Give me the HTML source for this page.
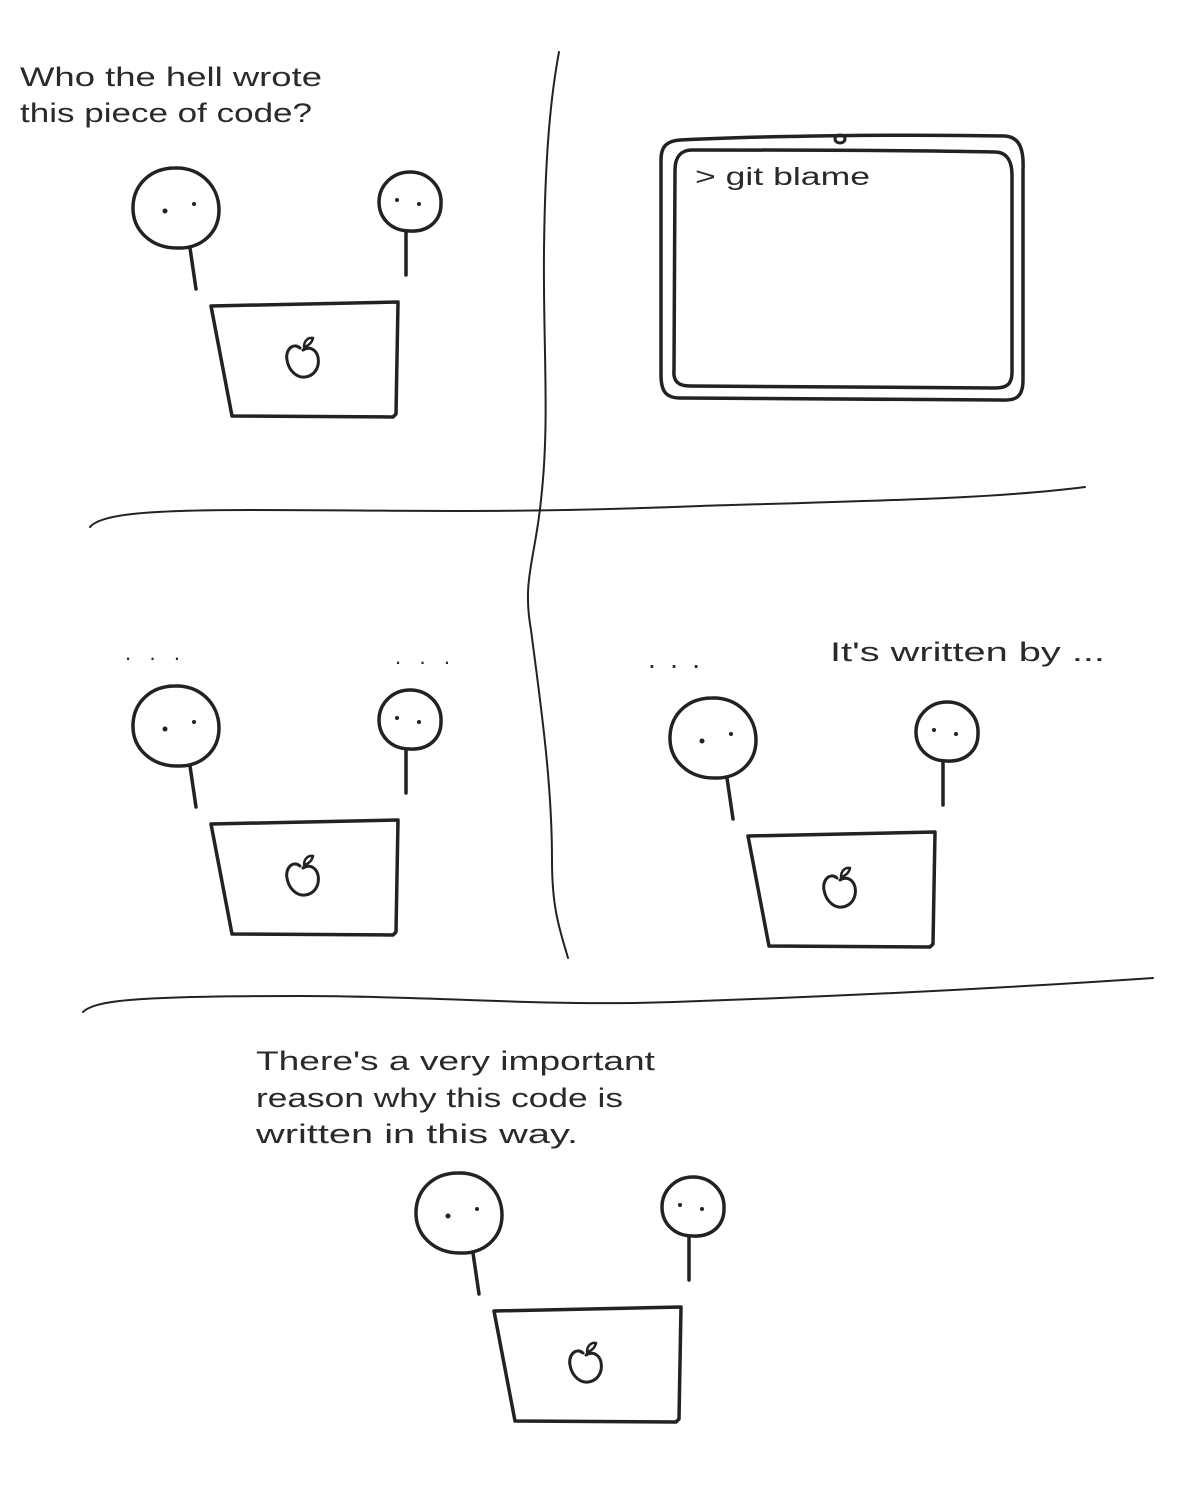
<!DOCTYPE html>
<html><head><meta charset="utf-8"><style>
html,body{margin:0;padding:0;background:#fff;}
svg{display:block}
text{font-family:"Liberation Sans",sans-serif;fill:#2a2a2a;font-size:27px}
</style></head><body>
<svg width="1200" height="1500" viewBox="0 0 1200 1500" xmlns="http://www.w3.org/2000/svg">
<defs>
<g id="scene" fill="none" stroke="#222" stroke-width="3.5" stroke-linecap="round" stroke-linejoin="round">
  <path d="M175 168 C200 167 219 186 219 210 C219 233 201 249 177 248 C152 248 132 231 133 206 C134 184 151 168 175 168 Z"/>
  <path d="M190 248 L196 289"/>
  <path d="M410 172 C428 172 442 186 441 204 C441 221 428 232 410 231 C392 231 379 219 379 202 C379 185 393 172 410 172 Z"/>
  <path d="M406 232 L406 275"/>
  <path d="M211 306 L398 302 L396 414 L393 417 L232 416 Z"/>
  <path d="M300 348 C293 342 285 350 287 360 C289 372 298 378 305 377 C314 376 320 368 318 357 C316 349 309 346 303 350" stroke-width="3"/>
  <path d="M304 347 C304 341 308 337 313 338 C312 343 308 346 304 347 Z" stroke-width="2.5"/>
  <circle cx="165" cy="211" r="2.5" fill="#222" stroke="none"/>
  <circle cx="194" cy="204" r="2" fill="#222" stroke="none"/>
  <circle cx="397" cy="200" r="2" fill="#222" stroke="none"/>
  <circle cx="419" cy="204" r="2" fill="#222" stroke="none"/>
</g>
</defs>

<text x="20" y="86" textLength="302" lengthAdjust="spacingAndGlyphs">Who the hell wrote</text>
<text x="20" y="122" textLength="292" lengthAdjust="spacingAndGlyphs">this piece of code?</text>
<use href="#scene"/>

<g fill="none" stroke="#222" stroke-width="2" stroke-linecap="round">
  <path d="M559 52 C550 100 545 160 544 250 C543 350 550 420 541 500 C535 560 522 580 531 630 C540 700 552 780 552 860 C552 910 560 930 568 958"/>
  <path d="M90 527 C100 515 140 510 250 510 C400 510 500 514 700 506 C900 500 1000 498 1085 487"/>
  <path d="M83 1012 C95 1000 140 996 300 996 C450 996 550 1008 700 1001 C900 994 1050 985 1153 978"/>
</g>

<g fill="none" stroke="#222" stroke-width="3.5" stroke-linejoin="round">
  <path d="M680 140 C760 136 900 134 1005 136 C1020 137 1024 150 1023 170 L1023 380 C1023 398 1015 401 1000 400 L680 398 C665 398 661 390 661 375 L661 160 C661 146 667 141 680 140 Z"/>
  <path d="M692 150 C780 150 900 150 995 152 C1008 152 1012 163 1012 175 L1012 372 C1012 385 1006 388 995 388 L690 386 C678 386 673 381 674 370 L675 170 C675 157 681 150 692 150 Z"/>
  <ellipse cx="840" cy="139" rx="5" ry="4" stroke-width="3"/>
</g>
<text x="695" y="185" style="font-size:25px" textLength="175" lengthAdjust="spacingAndGlyphs">&gt; git blame</text>

<text x="125" y="660" style="font-size:22px" textLength="55" lengthAdjust="spacing">. . .</text>
<text x="395" y="664" style="font-size:22px" textLength="55" lengthAdjust="spacing">. . .</text>
<use href="#scene" transform="translate(0,518)"/>

<text x="648" y="668" style="font-size:28px" textLength="52" lengthAdjust="spacing">. . .</text>
<text x="830" y="661" textLength="275" lengthAdjust="spacingAndGlyphs">It's written by ...</text>
<use href="#scene" transform="translate(537,530)"/>

<text x="256" y="1070" textLength="399" lengthAdjust="spacingAndGlyphs">There's a very important</text>
<text x="256" y="1107" textLength="367" lengthAdjust="spacingAndGlyphs">reason why this code is</text>
<text x="256" y="1143" textLength="322" lengthAdjust="spacingAndGlyphs">written in this way.</text>
<use href="#scene" transform="translate(283,1005)"/>
</svg>
</body></html>
